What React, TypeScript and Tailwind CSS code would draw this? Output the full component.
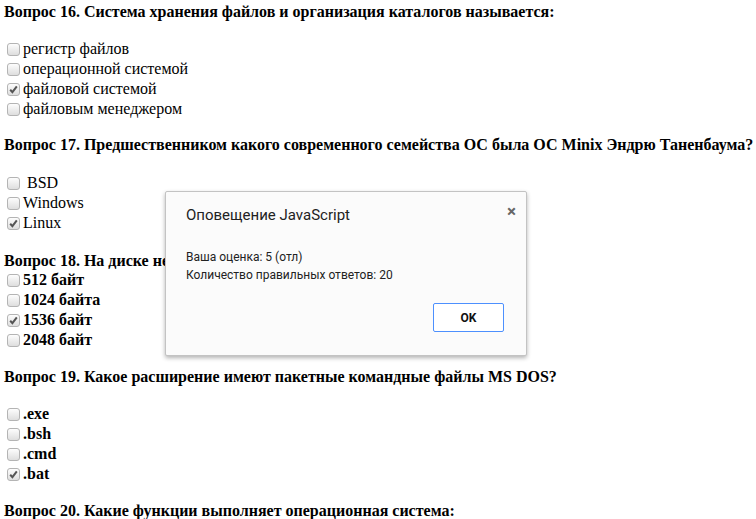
import React from "react";

type Option = { label: string; checked?: boolean };

function Checkbox({ checked }: { checked?: boolean }) {
  return (
    <span className="relative inline-block w-[13px] h-[13px] mr-[3px] ml-[3px] align-[-1px] rounded-[3px] border border-[#b4b4b4] bg-gradient-to-b from-[#fdfdfd] to-[#dedede] shrink-0">
      {checked && (
        <svg viewBox="0 0 13 13" className="absolute left-[-1px] top-[-1px] w-[13px] h-[13px]">
          <path d="M3.2 6.8 L5.4 9.2 L9.8 3.4" fill="none" stroke="#555" strokeWidth="2" />
        </svg>
      )}
    </span>
  );
}

function OptionRow({ label, checked, bold }: Option & { bold?: boolean }) {
  return (
    <div className={`h-[20px] leading-[20px] flex items-center ${bold ? "font-bold" : ""}`}>
      <Checkbox checked={checked} />
      <span>{label}</span>
    </div>
  );
}

const q16: Option[] = [
  { label: "регистр файлов" },
  { label: "операционной системой" },
  { label: "файловой системой", checked: true },
  { label: "файловым менеджером" },
];

const q17: Option[] = [
  { label: "\u00a0BSD" },
  { label: "Windows" },
  { label: "Linux", checked: true },
];

const q18: Option[] = [
  { label: "512 байт" },
  { label: "1024 байта" },
  { label: "1536 байт", checked: true },
  { label: "2048 байт" },
];

const q19: Option[] = [
  { label: ".exe" },
  { label: ".bsh" },
  { label: ".cmd" },
  { label: ".bat", checked: true },
];

export default function App() {
  return (
    <div className="relative w-[756px] h-[519px] overflow-hidden bg-white text-black text-[16px] font-['Liberation_Serif',serif] pl-[4px]">
      <div className="h-[20px] leading-[20px] mt-[2px] font-bold">
        Вопрос 16. Система хранения файлов и организация каталогов называется:
      </div>
      <div className="mt-[17px]">
        {q16.map((o) => (
          <OptionRow key={o.label} {...o} />
        ))}
      </div>

      <div className="h-[20px] leading-[20px] mt-[16px] font-bold">
        Вопрос 17. Предшественником какого современного семейства ОС была ОС Minix Эндрю Таненбаума?
      </div>
      <div className="mt-[18px]">
        {q17.map((o) => (
          <OptionRow key={o.label} {...o} />
        ))}
      </div>

      <div className="h-[18px] leading-[18px] mt-[19px] font-bold">
        Вопрос 18. На диске нечетного размера кластер может занимать:
      </div>
      <div>
        {q18.map((o) => (
          <OptionRow key={o.label} {...o} bold />
        ))}
      </div>

      <div className="h-[20px] leading-[20px] mt-[17px] font-bold">
        Вопрос 19. Какое расширение имеют пакетные командные файлы MS DOS?
      </div>
      <div className="mt-[17px]">
        {q19.map((o) => (
          <OptionRow key={o.label} {...o} bold />
        ))}
      </div>

      <div className="h-[20px] leading-[20px] mt-[17px] font-bold">
        Вопрос 20. Какие функции выполняет операционная система:
      </div>

      {/* alert dialog */}
      <div className="absolute left-[165px] top-[191px] w-[362px] h-[165px] bg-[#fbfbfb] border border-[#c3c3c3] rounded-[2px] shadow-[0_2px_4px_rgba(0,0,0,0.3)] font-['Roboto',sans-serif]">
        <div className="flex items-start justify-between pl-[20px] pr-[10px] pt-[13px]">
          <div className="text-[15px] leading-[20px] text-[#222]">Оповещение JavaScript</div>
          <span className="text-[#666] text-[17px] leading-[16px] font-bold mt-[-2px]">×</span>
        </div>
        <div className="pl-[20px] mt-[23px] text-[12px] leading-[18px] text-[#222]">
          <div>Ваша оценка: 5 (отл)</div>
          <div>Количество правильных ответов: 20</div>
        </div>
        <div className="flex justify-end pr-[22px] mt-[19px]">
          <button className="w-[71px] h-[29px] border border-[#4d90fe] rounded-[2px] bg-white text-[12px] font-bold text-[#111]">
            OK
          </button>
        </div>
      </div>
    </div>
  );
}
